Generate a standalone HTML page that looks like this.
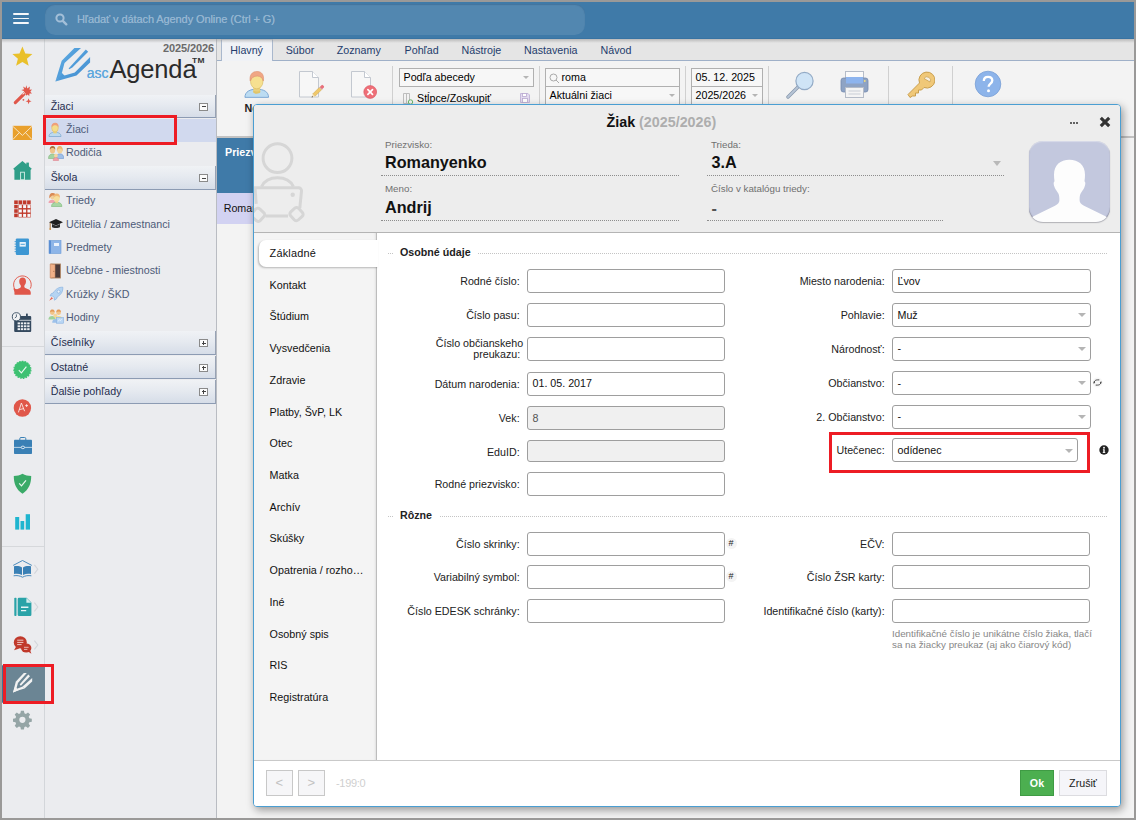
<!DOCTYPE html>
<html lang="sk">
<head>
<meta charset="utf-8">
<title>ascAgenda - Žiak</title>
<style>
*{box-sizing:border-box;margin:0;padding:0}
html,body{width:1136px;height:820px;overflow:hidden;background:#9a9998}
body{font-family:"Liberation Sans",Arial,sans-serif;font-size:12px;color:#222;position:relative}
.abs{position:absolute}
#app{position:absolute;left:2px;top:2px;width:1132px;height:816px;background:#ebecef;overflow:hidden}
/* top bar */
#topbar{position:absolute;left:0;top:0;width:1132px;height:37px;background:#3f7aa8;border-bottom:1px solid #3873a2;z-index:5}
#topshadow{position:absolute;left:0;top:37px;width:1132px;height:4px;background:linear-gradient(rgba(150,150,150,.55),rgba(190,190,190,0));z-index:4}
#burger i{position:absolute;left:10.5px;width:16px;height:1.7px;background:#f4f7fa;border-radius:1px}
#search{position:absolute;left:43px;top:2px;width:540px;height:31px;border-radius:10px;background:#5287b0;box-shadow:inset 0 1px 1px rgba(40,80,120,.35)}
#search span{position:absolute;left:32px;top:8.5px;font-size:11px;color:#93b5d1;white-space:nowrap;letter-spacing:-0.09px;text-shadow:0 0 .6px #93b5d1}
/* icon strip */
#strip{position:absolute;left:0;top:37px;width:43px;height:779px;background:#ebecef;border-right:1px solid #d3d6da}
#strip svg{position:absolute}
.sdiv{position:absolute;left:0;width:42px;height:1px;background:#d6d8db}
/* sidebar */
#side{position:absolute;left:43px;top:37px;width:172px;height:779px;background:#ebecef;border-right:1px solid #b9bcc2}
.shead{position:absolute;left:0;width:171px;height:23.7px;background:linear-gradient(#f0f2f5,#e6eaf0 45%,#d6dde8);border-right:1px solid #97a2b4;border-bottom:1px solid #8c9bb3;color:#1f2d4e;font-size:10.7px;padding:5.2px 0 0 5.7px}
.shead b{position:absolute;right:7px;top:8px;width:9px;height:8px;border:1px solid #8a8a8a;background:#fbfbfb}
.shead b:before{content:"";position:absolute;left:1.5px;top:2.5px;width:4px;height:1px;background:#444}
.shead b.plus:after{content:"";position:absolute;left:3px;top:1px;width:1px;height:4px;background:#444}
.sitem{position:absolute;left:0;width:171px;height:23px;color:#4d5b78;font-size:10.7px;padding:4.4px 0 0 21px;white-space:nowrap}
.sitem svg{position:absolute;left:3px;top:2.6px}
/* main */
#main{position:absolute;left:215px;top:37px;width:917px;height:779px;background:#f3f3f3}
#tabs{position:absolute;left:0;top:0;width:917px;height:22px;background:#e5e5e5;border-bottom:1px solid #9fb0c8}
#tabs span{position:absolute;top:5px;font-size:10.7px;color:#243c6c;white-space:nowrap}
#tabact{position:absolute;left:3.6px;top:0;width:52.4px;height:22px;background:#f0f2f6;border:1px solid #a9b8cd;border-top-color:#cfd6e0;border-bottom:none}
#ribbon{position:absolute;left:0;top:22px;width:917px;height:77px;background:#f3f3f3;border-bottom:2px solid #c2c2c2}
.rsep{position:absolute;top:4.5px;width:1px;height:68px;background:#d0d0d0}
.rin{position:absolute;height:18.6px;border:1px solid #b0b0b0;background:#f7f7f7;font-size:10.7px;color:#000;padding:2px 0 0 3.5px;white-space:nowrap}
.rin i,.dd{position:absolute;right:4px;top:7px;width:0;height:0;border:3.3px solid transparent;border-top:3.6px solid #b5b5b5;border-bottom:none}
.rlab{position:absolute;top:41px;font-size:10.7px;font-weight:bold;color:#222;white-space:nowrap}
#thead{position:absolute;left:0;top:99px;width:61px;height:54.5px;background:#3f7aa8;color:#fff;font-weight:bold;font-size:10.7px;padding:8.4px 0 0 8px}
#trow{position:absolute;left:0;top:153.500px;width:61px;height:31.500px;background:#d2d2f2;color:#111;font-size:10.700px;padding:9px 0 0 6.700px}
/* dialog */
#dlg{position:absolute;left:251px;top:102px;width:868px;height:703px;background:#fff;border:1px solid #4a9ed2;border-radius:4px;box-shadow:2px 3px 8px rgba(0,0,0,.38);z-index:10;overflow:hidden}
#dhead{position:absolute;left:0;top:0;width:866px;height:128px;background:#ededed;border-bottom:1px solid #b4b4b4}
#dnav{position:absolute;left:0;top:128px;width:123px;height:527px;background:#f4f4f4;border-right:1px solid #bdbdbd;box-shadow:inset -2px 0 2px -1px rgba(0,0,0,.08)}
#dnav span{position:absolute;left:15.6px;font-size:10.75px;color:#111;white-space:nowrap}
#navact{position:absolute;left:5px;top:135px;width:119px;height:26.6px;background:#fff;border-radius:7px 0 0 7px;box-shadow:-1px 1px 2px rgba(0,0,0,.25)}
#dfoot{position:absolute;left:0;top:655px;width:866px;height:46px;background:#fff;border-top:1px solid #c9c9c9}
.hl{position:absolute;font-size:9.75px;color:#707070;margin-top:-1px;white-space:nowrap}
.hv{position:absolute;font-size:16.2px;font-weight:bold;color:#111;white-space:nowrap}
.dot{position:absolute;height:0;border-top:1px dotted #8d8d8d}
.lab{position:absolute;font-size:10.7px;color:#222;text-align:right;white-space:nowrap}
.inp{position:absolute;height:24px;border:1px solid #9e9e9e;border-radius:3px;background:#fff;font-size:10.7px;color:#111;padding:4.8px 0 0 4.5px;white-space:nowrap}
.inp.ro{background:#f0f0f0;color:#555}
.inp .dd{right:4px;top:9.5px;border-width:4px;border-top-width:4px;border-top-color:#b5b5b5}
.hash{position:absolute;width:11px;height:11px;border-radius:6px;background:#f4f4f4;color:#222;font-size:9px;line-height:11px;text-align:center;margin-top:-.5px}
.sec{position:absolute;font-size:10.7px;font-weight:bold;color:#222;white-space:nowrap}
.red{position:absolute;border:3px solid #ed1c24;z-index:30}
</style>
</head>
<body>
<div id="app">

<div id="topbar">
  <div id="burger"><i style="top:11px"></i><i style="top:15.700px"></i><i style="top:20.400px"></i></div>
  <div id="search">
    <svg class="abs" style="left:10px;top:9px" width="13" height="13" viewBox="0 0 13 13"><circle cx="5" cy="5" r="3.6" fill="none" stroke="#a3bfd8" stroke-width="2"/><path d="M7.8 7.8 L11.3 11.3" stroke="#a3bfd8" stroke-width="2.400" stroke-linecap="round"/></svg>
    <span>Hľadať v dátach Agendy Online (Ctrl + G)</span>
  </div>
</div>
<div id="topshadow"></div>

<div id="strip">
<!--STRIP-->
<div class="sdiv" style="top:307px"></div>
<div class="sdiv" style="top:506.500px"></div>
<svg style="left:0;top:0" width="43" height="779" viewBox="2 39 43 779">
<!-- star -->
<polygon fill="#e9c02b" points="22.4,46.6 25.3,53.6 32.4,54 26.9,58.7 28.7,65.8 22.4,61.9 16.1,65.8 17.9,58.7 12.4,54 19.5,53.6"/>
<!-- wand -->
<g fill="#e0574a">
<path d="M14.2 101.6 L23.6 92.2 L25.8 94.4 L16.4 103.8 A1.55 1.55 0 0 1 14.2 101.6Z"/>
<polygon points="26.3,85.2 27.3,88.6 29.9,86.4 29.5,89.7 32,89.6 30.3,91.7 32,93.4 29.4,93.5 29.3,96 27.4,94.5 26.4,95.8 25.5,93.2 22.6,93.8 24.3,91.3 21.3,90 24.2,89.3 23,86.5 25.6,88"/>
<polygon points="28.6,98.2 29.4,100.4 31.6,101.2 29.4,102 28.6,104.2 27.8,102 25.6,101.2 27.8,100.4"/>
<circle cx="23.4" cy="99.8" r="0.9"/>
</g>
<path d="M22.6 94.4 L24.6 92.4" stroke="#f6e3e0" stroke-width="1.1"/>
<!-- mail -->
<rect x="12.8" y="125.8" width="19.2" height="14.2" fill="#e9a02c"/>
<path d="M12.8 126.3 L22.4 135.4 L32 126.3 M12.8 139.6 L19.3 132.6 M32 139.6 L25.5 132.6" fill="none" stroke="#f7ead2" stroke-width="0.9"/>
<!-- home -->
<g fill="#2f9e88">
<polygon points="22.4,161 31.8,168.8 30.6,170 30.6,179.8 14.4,179.8 14.4,170 13.2,168.8"/>
<rect x="26.3" y="162.6" width="2.6" height="5"/>
</g>
<rect x="20.6" y="172.2" width="3.8" height="7.6" fill="none" stroke="#d9efe9" stroke-width="0.9"/>
<!-- grid -->
<g fill="#c0392b">
<rect x="14.2" y="200.4" width="3.6" height="3.6"/><rect x="18.5" y="200.4" width="3.6" height="3.6"/><rect x="22.8" y="200.4" width="3.6" height="3.6"/><rect x="27.1" y="200.4" width="3.6" height="3.6"/>
<rect x="14.2" y="204.8" width="3.6" height="3.6"/><rect x="14.2" y="209.2" width="3.6" height="3.6"/><rect x="14.2" y="213.6" width="3.6" height="3.6"/>
</g>
<rect x="18.300" y="204.600" width="12.500" height="12.800" fill="#c0392b"/><g fill="#f7f7f9"><rect x="18.800" y="205.100" width="3" height="3"/><rect x="23.100" y="205.100" width="3" height="3"/><rect x="27.400" y="205.100" width="3" height="3"/><rect x="18.800" y="209.500" width="3" height="3"/><rect x="23.100" y="209.500" width="3" height="3"/><rect x="27.400" y="209.500" width="3" height="3"/><rect x="18.800" y="213.900" width="3" height="3"/><rect x="23.100" y="213.900" width="3" height="3"/><rect x="27.400" y="213.900" width="3" height="3"/></g>
<!-- notebook -->
<rect x="15.8" y="238.4" width="13.2" height="16.6" rx="1.2" fill="#3d97d3"/>
<path d="M14.6 241.6h2.2M14.6 244.1h2.2M14.6 246.6h2.2M14.6 249.1h2.2M14.6 251.6h2.2" stroke="#3d97d3" stroke-width="0.9"/>
<rect x="19.6" y="242" width="6.2" height="4.6" fill="#eaf3fa"/>
<path d="M20.6 244.3h4.2" stroke="#3d97d3" stroke-width="0.9"/>
<!-- user refresh -->
<path d="M14.900 289.300 A8.800 8.800 0 1 1 30.300 288.600" fill="none" stroke="#e0574a" stroke-width="0.950"/>
<g fill="#e0574a">
<polygon points="13.300,288.200 17.300,289.400 14.600,292.200"/>
<path d="M22.600 277.500c2.100 0 3.400 1.500 3.400 3.700 0 1.500-.5 2.900-1.300 3.900-.3.400-.4.900-.4 1.400 0 .8.500 1.300 1.600 1.700 2.300.900 4.300 1.500 4.800 3.800.2.900.1 1.900-.1 2.800h-16c-.2-.9-.3-1.900-.1-2.800.5-2.300 2.500-2.900 4.800-3.800 1.100-.4 1.600-.9 1.600-1.700 0-.5-.1-1-.4-1.400-.8-1-1.300-2.400-1.300-3.900 0-2.200 1.300-3.700 3.400-3.700z"/>
</g>
<!-- calendar clock -->
<g fill="#34495e">
<rect x="14.2" y="316" width="17" height="16" rx="1"/>
<rect x="26" y="313.600" width="1.800" height="3.400"/>
</g>
<path d="M18 320.300h13.200" stroke="#ebedf0" stroke-width="0.8"/>
<g fill="#eef0f3">
<rect x="17.600" y="322.400" width="2.400" height="1.900"/><rect x="20.800" y="322.400" width="2.400" height="1.900"/><rect x="24" y="322.400" width="2.400" height="1.900"/><rect x="27.200" y="322.400" width="2.400" height="1.900"/>
<rect x="17.600" y="325.300" width="2.400" height="1.900"/><rect x="20.800" y="325.300" width="2.400" height="1.900"/><rect x="24" y="325.300" width="2.400" height="1.900"/><rect x="27.200" y="325.300" width="2.400" height="1.900"/>
<rect x="17.600" y="328.200" width="2.400" height="1.900"/><rect x="20.800" y="328.200" width="2.400" height="1.900"/><rect x="24" y="328.200" width="2.400" height="1.900"/><rect x="27.200" y="328.200" width="2.400" height="1.900"/>
</g>
<circle cx="16.400" cy="316.800" r="4.100" fill="#f1f2f4" stroke="#34495e" stroke-width="0.9"/>
<path d="M16.400 314.400v2.500l-1.600 1.100" fill="none" stroke="#34495e" stroke-width="0.8"/>
<!-- check badge -->
<circle cx="22.400" cy="369.800" r="8.500" fill="#3ec172" stroke="#3ec172" stroke-width="1.200" stroke-dasharray="1.600 1.200"/>
<path d="M18.800 370.200l2.600 2.700 5-6.200" fill="none" stroke="#ecf9f1" stroke-width="1.100"/>
<!-- A+ -->
<circle cx="22.400" cy="408" r="8.700" fill="#e0574a"/>
<path d="M18.400 412.400l3-9.400 3.200 8.200M19.200 409.600l4.600-1M25.200 405.600h2.800M26.600 404.200v2.800" fill="none" stroke="#fbe9e6" stroke-width="0.9"/>
<!-- briefcase -->
<path d="M19.800 440v-1.300a1.200 1.200 0 0 1 1.200-1.200h3.600a1.200 1.200 0 0 1 1.200 1.200v1.300" fill="none" stroke="#3a80b5" stroke-width="1"/>
<rect x="14" y="439.800" width="18" height="14.200" rx="0.800" fill="#3a80b5"/>
<path d="M14 447.400h18" stroke="#dce8f1" stroke-width="0.800"/>
<ellipse cx="22.900" cy="447.400" rx="1.700" ry="1.300" fill="#3a80b5" stroke="#e4edf4" stroke-width="0.900"/>
<!-- shield -->
<path d="M22.500 473.700c2.600 1.500 5.600 2.200 8.700 2.300 0 7.200-2.100 13.400-8.700 17.700-6.600-4.300-8.700-10.500-8.700-17.700 3.100-.1 6.100-.8 8.700-2.300z" fill="#3aaa68"/>
<path d="M19.200 483.400l2.300 2.500 4.500-5.500" fill="none" stroke="#e9f7ef" stroke-width="1.200"/>
<!-- chart -->
<g fill="#1fb5cf"><rect x="15.200" y="517" width="4" height="12.600"/><rect x="20.500" y="521" width="3.700" height="8.600"/><rect x="25.700" y="514.200" width="4.300" height="15.400"/></g>
<!-- book -->
<path d="M13.200 565.400l9.300-4.900 9.300 4.900" fill="none" stroke="#3a80b5" stroke-width="0.900"/>
<g fill="#3a80b5">
<path d="M14 566.300c2.800-.6 5.600-.3 8 1.100v7.600c-2.400-1.200-5.200-1.500-8-.900z"/>
<path d="M31 566.300c-2.800-.6-5.600-.3-8 1.100v7.600c2.400-1.200 5.200-1.500 8-.900z"/>
</g>
<path d="M13.600 575.800c3.200-.5 6-.2 8.900 1.400 2.900-1.600 5.700-1.900 8.900-1.400" fill="none" stroke="#3a80b5" stroke-width="0.900"/>
<!-- doc -->
<g fill="#2aa3a8">
<rect x="14.300" y="597.800" width="2.200" height="18.200" rx="0.800"/>
<path d="M19 597.800h7.600l4.800 4.800v12.100a1.300 1.300 0 0 1-1.300 1.300h-11.100a1.300 1.300 0 0 1-1.300-1.300v-15.600a1.300 1.300 0 0 1 1.300-1.300z"/>
</g>
<path d="M26.400 598v4.800h4.800z" fill="#d4edee"/>
<path d="M21 607.200h7.400M21 610.600h5.200" stroke="#e6f4f5" stroke-width="1.400"/>
<!-- chat -->
<g fill="#c0392b">
<ellipse cx="20.300" cy="642.400" rx="6.500" ry="6.200"/>
<polygon points="16.200,646.600 14,650.200 19.400,648.400"/>
<ellipse cx="26.200" cy="648" rx="5.200" ry="4.600"/>
<polygon points="28,651.600 31.400,653.800 30,650"/>
</g>
<path d="M17.200 640.200h6.200M17.200 642.400h6.200M17.200 644.600h4.400" stroke="#f3d9d6" stroke-width="0.900"/>
<path d="M24 647.300h4.600M24 649.400h3.400" stroke="#f3d9d6" stroke-width="0.800"/>
<ellipse cx="20.300" cy="642.400" rx="7.100" ry="6.800" fill="none" stroke="#ebedf0" stroke-width="0" />
<!-- chevrons -->
<path d="M34.400 564.800l3.400 4.400-3.400 4.400M34.400 602.600l3.400 4.400-3.400 4.400M34.400 640.600l3.400 4.400-3.400 4.400" fill="none" stroke="#d3d6db" stroke-width="1.100"/>
<!-- selected pen -->
<rect x="2" y="665.500" width="43" height="37" fill="#6b8594"/>
<rect x="2" y="665.500" width="1.500" height="37" fill="#3f7397"/>
<g fill="#f2f2f2" stroke="none">
<polygon points="13,692.400 15.900,681.300 18.100,682.500 16.300,689.100 22.800,686.500 24.600,688.500 17.100,690.700"/>
<polygon points="13,692.400 15.100,686.600 18.600,690.300"/>
<polygon points="15.900,681.400 23.800,672.900 26.800,672.900 17.900,683"/>
<polygon points="19.600,684.600 28.300,674.600 30,676.200 20.900,685.800"/>
<polygon points="22.600,686.600 32.200,678 32.200,681.400 24.600,688.600"/>
</g>
<!-- gear -->
<path fill="#95a5a6" fill-rule="evenodd" d="M20.900 710.800h3l.5 2.500 1.500.6 2.100-1.400 2.100 2.100-1.400 2.100.6 1.500 2.500.5v3l-2.500.5-.6 1.500 1.400 2.100-2.100 2.100-2.100-1.400-1.500.6-.5 2.500h-3l-.5-2.500-1.500-.6-2.100 1.400-2.100-2.100 1.400-2.100-.6-1.500-2.500-.5v-3l2.500-.5.600-1.500-1.400-2.100 2.100-2.100 2.100 1.400 1.500-.6zM22.400 716.700a3.100 3.100 0 1 0 0 6.200 3.100 3.100 0 0 0 0-6.200z"/>
</svg>
<!--/STRIP-->
</div>

<div id="side">
<!--SIDE-->
<!-- logo -->
<svg class="abs" style="left:8px;top:8px" width="40" height="38" viewBox="53 47 40 38">
<defs><linearGradient id="lg1" x1="0" y1="0" x2="1" y2="1"><stop offset="0" stop-color="#66b4e8"/><stop offset="1" stop-color="#3a84ca"/></linearGradient></defs>
<g fill="url(#lg1)"><polygon points="55.400,81.500 61.700,60.800 74.400,47.900 81,47.900 64.500,62.900 62,72.500"/><polygon points="55.400,81.500 61,72 65.300,76.600"/><polygon points="55.400,81.500 76.500,75.600 90.100,62.500 90.100,56.900 74.800,72.400 64.400,75.600"/><polygon points="68.600,68.400 85.800,49.600 88.200,51.800 72.400,67.400 69.200,69.200"/></g>
</svg>
<div class="abs" style="left:41.800px;top:26px;font-size:14px;color:#5fa8dd;text-shadow:0 0 .5px #5fa8dd">asc</div>
<div class="abs" style="left:64.400px;top:16px;font-size:25.500px;color:#2b2b2b;letter-spacing:-0.15px">Agenda</div>
<div class="abs" style="left:146.500px;top:17.500px;font-size:7px;font-weight:bold;color:#333;letter-spacing:0.3px;transform:scale(1.2,1);transform-origin:0 0">TM</div>
<div class="abs" style="right:2px;top:2.500px;font-size:11px;font-weight:bold;color:#6a6a6a;letter-spacing:-0.1px">2025/2026</div>

<div class="shead" style="top:55.800px">Žiaci<b></b></div>
<div class="abs" style="left:0;top:80px;width:171px;height:23.300px;background:#d1d9ee"></div>
<div class="sitem" style="top:80px">
<svg width="14" height="16" viewBox="0 0 14 16"><path d="M1 14.500c0-3 2.500-4.200 6-4.200s6 1.200 6 4.200z" fill="#bcdaf0" stroke="#7fa9d0" stroke-width="0.800"/><rect x="5.300" y="8" width="3.400" height="3.400" fill="#ecd27a"/><ellipse cx="7" cy="6" rx="3.300" ry="4" fill="#f4dd8b" stroke="#d9b860" stroke-width="0.500"/><path d="M3.500 5.400c-.4-3 1.300-4.600 3.700-4.600 2.300 0 3.800 1.600 3.300 4.600-.7-1.300-1.500-2-3-2.100-1.800 0-3 .6-4 2.100z" fill="#efa07a"/></svg>Žiaci</div>
<div class="sitem" style="top:103px">
<svg width="16" height="16" viewBox="0 0 16 16"><path d="M.5 13.500c0-3 1.500-4.500 4-4.500s4 1.500 4 4.500z" fill="#a5d3a2" stroke="#7fb57c" stroke-width="0.600"/><ellipse cx="4.500" cy="5.200" rx="2.600" ry="3.200" fill="#f0c48a"/><path d="M1.800 5c-.3-2.800 1-4 2.800-4s3 1.200 2.600 4c-.6-1.500-1.400-2-2.700-2-1.200 0-2 .5-2.700 2z" fill="#a9713f"/><path d="M8 13.500c0-3.200 1.600-4.700 4-4.700s3.700 1.500 3.700 4.700z" fill="#9fbfe8" stroke="#6f97cc" stroke-width="0.600"/><ellipse cx="11.800" cy="5.200" rx="2.600" ry="3.200" fill="#f3d49a"/><path d="M9 6.500c-.6-3.600.9-5.500 2.800-5.500s3.500 1.900 2.800 5.500c-.4-2-1.200-3-2.800-3s-2.400 1-2.800 3z" fill="#e9b872"/><path d="M5.200 15.500c0-2 1-3 2.700-3s2.700 1 2.700 3z" fill="#f3a0a8" stroke="#d97a86" stroke-width="0.500"/><circle cx="7.900" cy="10.600" r="1.900" fill="#f6d6a0"/></svg>Rodičia</div>

<div class="shead" style="top:127px">Škola<b></b></div>
<div class="sitem" style="top:150.900px">
<svg width="16" height="16" viewBox="0 0 16 16"><path d="M0.500 11c0-2.200 1.600-3.200 3.600-3.200s3.600 1 3.600 3.200z" fill="#f0a3ae"/><ellipse cx="4.800" cy="4.600" rx="2.600" ry="3" fill="#f2cf9a"/><path d="M1.400 6.500c-.6-3.600.8-5.500 3.400-5.500 2.200 0 3.400 1.200 3 3.600-1-1-2.600-1.400-4-.8-.8.500-1.400 1.200-2.400 2.700z" fill="#d98a55"/><path d="M3.500 14.500c0-3 2.200-4.200 5.200-4.200s5.200 1.200 5.200 4.200z" fill="#a8d6a4" stroke="#7ab879" stroke-width="0.600"/><rect x="7.300" y="8.500" width="2.800" height="2.600" fill="#ecd08c"/><ellipse cx="8.700" cy="6.200" rx="3" ry="3.600" fill="#f6df9c"/><path d="M5.600 6c-.4-3 1-4.600 3.200-4.600s3.500 1.600 3 4.600c-.6-1.400-1.400-2.100-3-2.100s-2.500.7-3.200 2.100z" fill="#f0b878"/></svg>Triedy</div>
<div class="sitem" style="top:174.200px">
<svg width="16" height="16" viewBox="0 0 16 16"><polygon points="8,3 15,6.200 8,9.400 1,6.200" fill="#1e1e1e"/><path d="M4 8v3c1 1.300 7 1.300 8 0v-3l-4 1.800z" fill="#2b2b2b"/><path d="M2.200 6.800v5.600" stroke="#a06a30" stroke-width="0.900"/><circle cx="2.200" cy="13" r="0.900" fill="#c98a3a"/></svg>Učitelia / zamestnanci</div>
<div class="sitem" style="top:197.700px">
<svg width="14" height="16" viewBox="0 0 14 16"><rect x="1" y="1.500" width="12" height="13" fill="#8db5e8" stroke="#6d9bd6" stroke-width="0.600"/><rect x="1" y="1.500" width="2" height="13" fill="#5b8fd4"/><rect x="6" y="4" width="5" height="3" fill="#eaf2fc"/></svg>Predmety</div>
<div class="sitem" style="top:221.100px">
<svg width="14" height="16" viewBox="0 0 14 16"><rect x="3" y="1" width="9.500" height="14" fill="#4a3a3a" stroke="#b08868" stroke-width="0.900"/><polygon points="2.200,1 7,1.600 7,14.400 2.200,15" fill="#f0b088" stroke="#c98a62" stroke-width="0.600"/><circle cx="5.800" cy="8.200" r="0.500" fill="#8a5a3a"/></svg>Učebne - miestnosti</div>
<div class="sitem" style="top:244.500px">
<svg width="16" height="16" viewBox="0 0 16 16"><path d="M14.800 1.200c-4-.2-7 1.600-9.600 5.800l-1.800.6-1.400 2.200 2.600.2 1.600 1.600.2 2.600 2.200-1.400.6-1.800c4.200-2.600 5.900-5.800 5.600-9.800z" fill="#b5d4f2" stroke="#86b2e0" stroke-width="0.700"/><circle cx="10.600" cy="5.600" r="1.500" fill="#eaf3fc" stroke="#7da6d6" stroke-width="0.600"/><path d="M3.600 11l-2.400 3.800 3.800-2.400z" fill="#e8604e"/></svg>Krúžky / ŠKD</div>
<div class="sitem" style="top:267.900px">
<svg width="16" height="16" viewBox="0 0 16 16"><circle cx="4.300" cy="3.600" r="2.400" fill="#f2c58a"/><circle cx="10.600" cy="3.600" r="2.400" fill="#f2c58a"/><path d="M2 3c.2-1.800 1.200-2.400 2.300-2.400s2.200.6 2.400 2.400c-1.200-.8-3.400-.8-4.700 0zM8.300 3c.2-1.800 1.200-2.400 2.300-2.400s2.200.6 2.400 2.400c-1.200-.8-3.400-.8-4.700 0z" fill="#e39a58"/><path d="M.4 10.500c0-2.500 1.600-3.600 3.800-3.600s3.600 1.100 3.600 3.600z" fill="#9fd19a"/><path d="M7 10.500c0-2.500 1.600-3.600 3.700-3.600s3.700 1.100 3.700 3.600z" fill="#f3de8a"/><circle cx="7.400" cy="6.800" r="2" fill="#f4d49a"/><path d="M4.200 13.800c0-2.600 1.400-3.800 3.200-3.800s3.200 1.200 3.200 3.800z" fill="#9dc1ea"/><rect x="8.400" y="8.600" width="7" height="5.600" fill="#b9d6f4" stroke="#86b0e0" stroke-width="0.600"/><path d="M10.200 12.400l1.200-1.800 1 1 1.200-1.600" fill="none" stroke="#fff" stroke-width="0.600"/></svg>Hodiny</div>

<div class="shead" style="top:292.300px">Číselníky<b class="plus"></b></div>
<div class="shead" style="top:316.700px">Ostatné<b class="plus"></b></div>
<div class="shead" style="top:340.900px">Ďalšie pohľady<b class="plus"></b></div>
<!--/SIDE-->
</div>

<div id="main">
<!--MAIN-->
<div id="tabs">
<div id="tabact"></div>
<span style="left:13.300px">Hlavný</span><span style="left:68.700px">Súbor</span><span style="left:119.800px">Zoznamy</span><span style="left:187.600px">Pohľad</span><span style="left:244.500px">Nástroje</span><span style="left:307px">Nastavenia</span><span style="left:383.600px">Návod</span>
</div>
<div id="ribbon">
<!-- user icon -->
<svg class="abs" style="left:25.700px;top:8.800px" width="27.500" height="28.800" viewBox="0 0 28 30" preserveAspectRatio="none"><path d="M2 28.500c0-6 5-8.500 12-8.500s12 2.500 12 8.500z" fill="#bcdcf2" stroke="#7aa6d4" stroke-width="1"/><rect x="10.500" y="16" width="7" height="7" fill="#e9d07c"/><path d="M10.500 21c1 1.800 6 1.800 7 0v2.500c-1 1.600-6 1.600-7 0z" fill="#e0c46a"/><ellipse cx="14" cy="12" rx="6.300" ry="7.600" fill="#f6e090" stroke="#d9bc62" stroke-width="0.700"/><path d="M7.300 11.500c-1-6.500 2.200-10 7-10 4.600 0 7.600 3.500 6.400 10-.8-3.200-2.600-5-6-5.200-3.800 0-6 1.800-7.400 5.200z" fill="#f0a684" stroke="#dd8f6e" stroke-width="0.600"/></svg>
<!-- doc edit -->
<svg class="abs" style="left:79.500px;top:8.700px" width="30" height="30" viewBox="0 0 30 30"><path d="M2.500 1.500h13l6 6v19.500h-19z" fill="#f7f7f7" stroke="#c3c8d0" stroke-width="1"/><path d="M15.500 1.500v6h6" fill="#fff" stroke="#c3c8d0" stroke-width="1"/><path d="M18 26.300L15.700 24 22.500 17.200 24.800 19.500z" fill="#f0c86a" stroke="#c9a24a" stroke-width="0.500"/><path d="M22.500 17.200L24.500 15.200a1 1 0 0 1 1.400 0L26.800 16.100a1 1 0 0 1 0 1.400L24.800 19.500z" fill="#e8707a"/><path d="M22.500 17.200l2.300 2.300" stroke="#c8cdd6" stroke-width="0.900"/><path d="M14.600 27.400L15.700 24 18 26.300z" fill="#f3dfb5"/><path d="M14.600 27.400l.5-1.500 1 1z" fill="#444"/></svg>
<!-- doc delete -->
<svg class="abs" style="left:131.500px;top:8.700px" width="30" height="30" viewBox="0 0 30 30"><path d="M2.500 1.500h13l6 6v19.500h-19z" fill="#f7f7f7" stroke="#c3c8d0" stroke-width="1"/><path d="M15.500 1.500v6h6" fill="#fff" stroke="#c3c8d0" stroke-width="1"/><circle cx="21.200" cy="22" r="6.400" fill="#ee6f78" stroke="#d9535e" stroke-width="0.600"/><path d="M18.900 19.700l4.600 4.600M23.500 19.700l-4.600 4.600" stroke="#fff" stroke-width="1.700" stroke-linecap="round"/></svg>
<div class="rlab" style="left:27.500px">Nový</div>
<div class="rlab" style="left:79px">Editovať</div>
<div class="rlab" style="left:130px">Zmazať</div>

<div class="rsep" style="left:175.300px"></div>
<div class="rin" style="left:182px;top:7.200px;width:135px">Podľa abecedy<i></i></div>
<svg class="abs" style="left:184.500px;top:30.500px" width="12" height="13" viewBox="0 0 12 13"><path d="M1.500 1.500h6v10h-6zM4.500 1.500v10" fill="none" stroke="#bdbdbd" stroke-width="1"/><circle cx="8.500" cy="10" r="2.200" fill="#f3f3f3" stroke="#6ab86a" stroke-width="1"/></svg>
<div class="abs" style="left:200px;top:31px;font-size:10.700px;color:#000;white-space:nowrap">Stĺpce/Zoskupiť</div>
<svg class="abs" style="left:301.500px;top:31px" width="12" height="12" viewBox="0 0 12 12"><path d="M1.500 1.500h7.500l1.500 1.500v7.500h-9z" fill="#e3dbef" stroke="#c5b8da" stroke-width="1"/><rect x="3.500" y="1.500" width="4" height="3" fill="#fff" stroke="#b8a8d0" stroke-width="0.800"/><rect x="3.500" y="6.500" width="5" height="4" fill="#fff" stroke="#b8a8d0" stroke-width="0.800"/></svg>

<div class="rsep" style="left:321.800px"></div>
<div class="rin" style="left:328px;top:7.400px;width:134.500px;padding-left:15.500px">roma</div>
<svg class="abs" style="left:332px;top:11.500px" width="11" height="11" viewBox="0 0 11 11"><circle cx="4.500" cy="4.500" r="3.500" fill="none" stroke="#aaa" stroke-width="1"/><path d="M7 7l3 3" stroke="#aaa" stroke-width="1"/></svg>
<div class="rin" style="left:328px;top:25px;width:134.500px;height:20px">Aktuálni žiaci<i></i></div>

<div class="rsep" style="left:467.700px"></div>
<div class="rin" style="left:474px;top:7.400px;width:71.600px">05. 12. 2025</div>
<div class="rin" style="left:474px;top:25px;width:71.600px;height:20px">2025/2026<i></i></div>

<div class="rsep" style="left:550.600px"></div>
<!-- magnifier -->
<svg class="abs" style="left:568.500px;top:9.500px" width="29" height="28" viewBox="0 0 29 28"><path d="M2 26l10-10" stroke="#8a9aae" stroke-width="3.400" stroke-linecap="round"/><path d="M2 26l10-10" stroke="#b7c5d6" stroke-width="1.800" stroke-linecap="round"/><circle cx="18.500" cy="10" r="8.600" fill="#cfe4f6" stroke="#93abc6" stroke-width="1.200"/></svg>
<!-- printer -->
<svg class="abs" style="left:623px;top:9.700px" width="29" height="27" viewBox="0 0 29 27"><rect x="5.500" y="0.500" width="18" height="9" fill="#fafafa" stroke="#b5bcc8" stroke-width="1"/><rect x="1" y="7" width="27" height="14" rx="2.500" fill="#8ea3c4" stroke="#7389ad" stroke-width="0.800"/><rect x="6" y="6" width="17" height="6.500" fill="#8db4ee"/><circle cx="24.800" cy="10" r="0.900" fill="#f5e07a"/><rect x="5.500" y="16.500" width="18" height="10" fill="#f4f4f4" stroke="#b5bcc8" stroke-width="1"/><path d="M8.500 20h12M8.500 23h12" stroke="#c9ced6" stroke-width="1"/></svg>
<div class="rsep" style="left:671px"></div>
<!-- key -->
<svg class="abs" style="left:689px;top:9.700px" width="29" height="28" viewBox="0 0 29 28"><path d="M2 23.500l11.500-11.500a8 8 0 1 1 4.500 4.500l-2.500 2.500h-3v3h-3v3h-3l-2.500 1.500z" fill="#f0c878" stroke="#c99f4e" stroke-width="1"/><path d="M18 7.500a3.200 3.200 0 0 1 6 3.500z" fill="#f7f0e2" stroke="#c99f4e" stroke-width="0.800"/></svg>
<div class="rsep" style="left:734.500px"></div>
<!-- help -->
<svg class="abs" style="left:757px;top:9px" width="28" height="28" viewBox="0 0 28 28"><circle cx="14" cy="14" r="12.800" fill="#8db4ea" stroke="#7a9fd6" stroke-width="0.800"/><path d="M9.800 11c0-2.600 1.800-4.200 4.300-4.200s4.200 1.500 4.200 3.700c0 3-3.700 3.200-3.700 6.200" fill="none" stroke="#fff" stroke-width="2.300"/><circle cx="14.500" cy="20.800" r="1.500" fill="#fff"/></svg>
<div class="rlab" style="left:566px;font-weight:normal;color:#243c6c;letter-spacing:-0.6px">Vyhľadať</div>
<div class="rlab" style="left:617px;font-weight:normal;color:#243c6c;letter-spacing:-0.2px">Vytlačiť</div>
<div class="rlab" style="left:689.500px;font-weight:normal;color:#243c6c;letter-spacing:-0.6px">Heslá</div>
<div class="rlab" style="left:757.500px;font-weight:normal;color:#243c6c;letter-spacing:-1.3px">Otázka?</div>
</div>
<div id="thead">Priezvisko</div>
<div id="trow">Romanyenko</div>
<!--/MAIN-->
</div>

<div id="dlg">
<!--DLG-->
<div id="dhead">
<svg class="abs" style="left:0;top:35px" width="56" height="86" viewBox="254 140 56 86"><g fill="none" stroke="#d6d6d6" stroke-width="3" stroke-linejoin="round"><circle cx="277.500" cy="158.200" r="14.400"/><path d="M261.600 186.600c2.700-5.600 8.600-8.800 15.900-8.800s13.200 3.200 15.900 8.800"/><path d="M250 187.800h48.500a3 3 0 0 1 3 3.300l-1.700 17"/><path d="M265.500 216h22.500"/><path d="M255 187.800l1.200 16"/><rect x="291" y="208.600" width="11" height="11" rx="2.800" transform="rotate(-42 296.500 214.100)" fill="#ededed"/><rect x="252.500" y="209.300" width="11" height="11" rx="2.800" transform="rotate(-48 258 214.800)" fill="#ededed"/></g><circle cx="292.700" cy="194.700" r="2.200" fill="#d6d6d6"/></svg>
<div class="abs" style="left:352.500px;top:9px;font-size:14.300px;font-weight:bold;color:#111;white-space:nowrap">Žiak <span style="color:#aeaeae">(2025/2026)</span></div>
<div class="abs" style="left:815.500px;top:16.500px;width:9px;height:3px"><i class="abs" style="left:0;top:0;width:2.300px;height:2.300px;background:#333;border-radius:1px"></i><i class="abs" style="left:3.300px;top:0;width:2.300px;height:2.300px;background:#333;border-radius:1px"></i><i class="abs" style="left:6.600px;top:0;width:2.300px;height:2.300px;background:#333;border-radius:1px"></i></div>
<svg class="abs" style="left:845px;top:11px" width="12" height="12" viewBox="0 0 12 12"><path d="M1.800 1.800l8.400 8.400M10.200 1.800l-8.400 8.400" stroke="#333" stroke-width="3.100"/></svg>
<div class="hl" style="left:131px;top:34.500px">Priezvisko:</div>
<div class="hv" style="left:131px;top:48px">Romanyenko</div>
<div class="dot" style="left:127px;top:69.500px;width:298px"></div>
<div class="hl" style="left:131px;top:78.500px">Meno:</div>
<div class="hv" style="left:131px;top:93px">Andrij</div>
<div class="dot" style="left:127px;top:115px;width:298px"></div>
<div class="hl" style="left:457px;top:34.500px">Trieda:</div>
<div class="hv" style="left:457.500px;top:48px">3.A</div>
<div class="dd" style="left:739px;top:56px;right:auto;border-width:4px;border-top-width:5px;border-top-color:#b9b9b9"></div>
<div class="dot" style="left:453px;top:69.500px;width:297px"></div>
<div class="hl" style="left:457px;top:78.500px">Číslo v katalógu triedy:</div>
<div class="hv" style="left:457.500px;top:93.500px;color:#555">-</div>
<div class="dot" style="left:453px;top:115px;width:236px"></div>
<!-- photo -->
<div class="abs" style="left:775px;top:35.500px;width:81px;height:81px;border-radius:14px;background:#c3c8de;box-shadow:inset 0 -1px 1px rgba(90,90,110,.55),inset 0 1px 1px rgba(255,255,255,.35),0 1px 1px rgba(120,120,130,.5);overflow:hidden">
<svg class="abs" style="left:0;top:0" width="81" height="81" viewBox="0 0 81 81"><path fill="#fdfdfd" d="M40.400 18.800c9 0 15.600 5.200 15.600 15 0 2.200-.2 4.500-.5 6.400 1.300 1 1 3.600-.2 6.400-.8 2-2.200 3.600-3.500 5.600-.9 1.400-1.200 4-1.200 6.800 0 2.600 1.300 4.300 4.400 5.800l22 10.800c1.500.8 2.500 2.400 3.500 5.400h-80c1-3 2-4.600 3.500-5.400l22-10.800c3.100-1.500 4.400-3.200 4.400-5.800 0-2.800-.3-5.400-1.200-6.800-1.300-2-2.700-3.600-3.500-5.600-1.200-2.800-1.500-5.400-.2-6.400-.3-1.900-.5-4.200-.5-6.400 0-9.800 6.400-15 15.400-15z"/></svg>
</div>
</div>

<div id="dnav">
<span style="top:13.83px">Základné</span>
<span style="top:45.57px">Kontakt</span>
<span style="top:77.31px">Štúdium</span>
<span style="top:109.05px">Vysvedčenia</span>
<span style="top:140.79px">Zdravie</span>
<span style="top:172.53px">Platby, ŠvP, LK</span>
<span style="top:204.27px">Otec</span>
<span style="top:236.01px">Matka</span>
<span style="top:267.75px">Archív</span>
<span style="top:299.49px">Skúšky</span>
<span style="top:331.23px">Opatrenia / rozho…</span>
<span style="top:362.97px">Iné</span>
<span style="top:394.71px">Osobný spis</span>
<span style="top:426.45px">RIS</span>
<span style="top:458.19px">Registratúra</span>
</div>
<div id="navact"></div>
<div class="abs" style="left:15.600px;top:141.830px;font-size:10.900px;letter-spacing:0.2px;color:#111;z-index:3">Základné</div>

<!-- form -->
<div class="sec" style="left:146px;top:141.2px">Osobné údaje</div>
<div class="dot" style="left:134px;top:147.7px;width:5px;border-color:#c4c4c4"></div>
<div class="dot" style="left:224px;top:147.7px;width:629px;border-color:#c4c4c4"></div>
<div class="lab" style="right:600.4px;top:170.1px">Rodné číslo:</div>
<div class="inp" style="left:273px;top:164.1px;width:198px"></div>
<div class="lab" style="right:600.4px;top:203.8px">Číslo pasu:</div>
<div class="inp" style="left:273px;top:197.8px;width:198px"></div>
<div class="lab" style="right:596.9px;top:232.8px;line-height:11.6px">Číslo občianskeho<br>preukazu:&nbsp;</div>
<div class="inp" style="left:273px;top:232.2px;width:198px"></div>
<div class="lab" style="right:600.4px;top:272.6px">Dátum narodenia:</div>
<div class="inp" style="left:273px;top:266.6px;width:198px">01. 05. 2017</div>
<div class="lab" style="right:600.4px;top:306.8px">Vek:</div>
<div class="inp ro" style="left:273px;top:300.8px;width:198px">8</div>
<div class="lab" style="right:600.4px;top:340.5px">EduID:</div>
<div class="inp ro" style="left:273px;top:334.5px;width:198px;height:22.3px"></div>
<div class="lab" style="right:600.4px;top:372.5px">Rodné priezvisko:</div>
<div class="inp" style="left:273px;top:366.5px;width:198px"></div>
<div class="lab" style="right:235.4px;top:170.3px">Miesto narodenia:</div>
<div class="inp" style="left:638px;top:164.3px;width:198.5px">Ľvov</div>
<div class="lab" style="right:235.4px;top:203.8px">Pohlavie:</div>
<div class="inp" style="left:638px;top:197.8px;width:198.5px">Muž<i class="dd"></i></div>
<div class="lab" style="right:235.4px;top:237.7px">Národnosť:</div>
<div class="inp" style="left:638px;top:231.7px;width:198.5px">-<i class="dd"></i></div>
<div class="lab" style="right:235.4px;top:271.8px">Občianstvo:</div>
<div class="inp" style="left:638px;top:265.8px;width:198.5px">-<i class="dd"></i></div>
<div class="lab" style="right:235.4px;top:305.5px">2. Občianstvo:</div>
<div class="inp" style="left:638px;top:299.5px;width:198.5px">-<i class="dd"></i></div>
<div class="lab" style="right:235.4px;top:339.2px">Utečenec:</div>
<div class="inp" style="left:638px;top:333.2px;width:185.5px">odídenec<i class="dd"></i></div>
<svg class="abs" style="left:837.7px;top:271.6px" width="11" height="11" viewBox="-5.500 -5.500 11 11"><circle cx="0" cy="0" r="5.100" fill="#f7f7f7"/><path d="M-3.300 -0.300C-3 -1.900 -1.600 -2.600 0 -2.600L1.800 -2.600M3.300 0.300C3 1.900 1.600 2.600 0 2.600L-1.800 2.600" fill="none" stroke="#333" stroke-width="0.900"/><path d="M-4.200 0.900L-3.600 -1.300L-2.300 0.500zM4.200 -0.900L3.600 1.300L2.300 -0.500z" fill="#333"/></svg>
<svg class="abs" style="left:844.7px;top:340px" width="10" height="10" viewBox="0 0 10 10"><circle cx="5" cy="5" r="4.700" fill="#222"/><circle cx="5" cy="2.700" r="0.950" fill="#fff"/><path d="M3.900 4.300h1.800v3h.6v.8h-2.600v-.8h.6v-2.200h-.4z" fill="#fff"/></svg>
<div class="sec" style="left:146px;top:404.4px">Rôzne</div>
<div class="dot" style="left:134px;top:410.9px;width:5px;border-color:#c4c4c4"></div>
<div class="dot" style="left:185.5px;top:410.9px;width:667.5px;border-color:#c4c4c4"></div>
<div class="lab" style="right:600.4px;top:433.3px">Číslo skrinky:</div>
<div class="inp" style="left:273px;top:427.3px;width:198px"></div>
<div class="lab" style="right:235.4px;top:433.3px">EČV:</div>
<div class="inp" style="left:638px;top:427.3px;width:198px"></div>
<div class="lab" style="right:600.4px;top:466.4px">Variabilný symbol:</div>
<div class="inp" style="left:273px;top:460.4px;width:198px"></div>
<div class="lab" style="right:235.4px;top:466.4px">Číslo ŽSR karty:</div>
<div class="inp" style="left:638px;top:460.4px;width:198px"></div>
<div class="lab" style="right:600.4px;top:500.3px">Číslo EDESK schránky:</div>
<div class="inp" style="left:273px;top:494.3px;width:198px"></div>
<div class="lab" style="right:235.4px;top:500.3px">Identifikačné číslo (karty):</div>
<div class="inp" style="left:638px;top:494.3px;width:198px"></div>
<div class="hash" style="left:471.6px;top:433.5px">#</div>
<div class="hash" style="left:471.6px;top:466.6px">#</div>
<div class="abs" style="left:638px;top:522.5px;font-size:9.8px;line-height:11px;color:#878787;white-space:nowrap">Identifikačné číslo je unikátne číslo žiaka, tlačí<br>sa na žiacky preukaz (aj ako čiarový kód)</div>
<div id="dfoot">
<div class="abs" style="left:12px;top:9px;width:26.500px;height:26px;border:1px solid #c8c8c8;background:#f6f6f8;color:#c2c2c2;font-size:13px;text-align:center;line-height:23px">&lt;</div>
<div class="abs" style="left:44px;top:9px;width:26.500px;height:26px;border:1px solid #c8c8c8;background:#f6f6f8;color:#c2c2c2;font-size:13px;text-align:center;line-height:23px">&gt;</div>
<div class="abs" style="left:82px;top:16px;font-size:11px;color:#cfcfcf;letter-spacing:-0.3px">-199:0</div>
<div class="abs" style="left:766px;top:9px;width:34px;height:26px;background:#4caf50;border:1px solid #3f9b44;color:#fff;font-size:10.700px;font-weight:bold;text-align:center;line-height:24px">Ok</div>
<div class="abs" style="left:805px;top:9px;width:48px;height:26px;background:#f5f5f9;border:1px solid #dcdce0;color:#222;font-size:10.700px;text-align:center;line-height:24px">Zrušiť</div>
</div>
<!--/DLG-->
</div>

<div class="red" style="left:41px;top:113px;width:134px;height:30px"></div>
<div class="red" style="left:1px;top:662px;width:51px;height:40px"></div>
<div class="red" style="left:827px;top:429.500px;width:261px;height:41.200px"></div>

</div>
</body>
</html>
